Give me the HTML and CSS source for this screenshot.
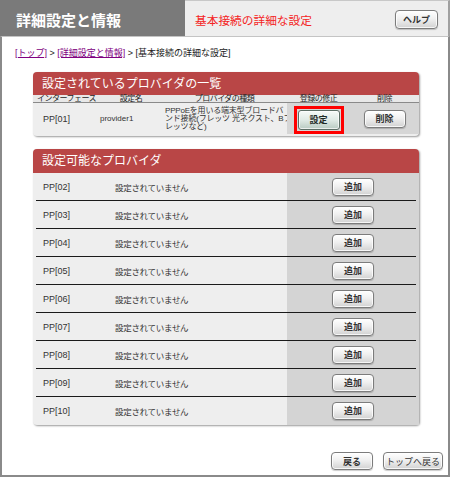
FILE: index.html
```html
<!DOCTYPE html>
<html lang="ja">
<head>
<meta charset="utf-8">
<title>詳細設定と情報</title>
<link rel="stylesheet" href="styles.css">
</head>
<body>
<div class="page">
  <header class="top">
    <div class="title">詳細設定と情報</div>
    <div class="sub">
      <span class="sub-text">基本接続の詳細な設定</span>
      <button class="btn help">ヘルプ</button>
    </div>
  </header>
  <main class="main">
    <nav class="crumb"><a href="#">[トップ]</a> &gt; <a href="#">[詳細設定と情報]</a> &gt; [基本接続の詳細な設定]</nav>

    <section class="panel p1">
      <h2>設定されているプロバイダの一覧</h2>
      <div class="cols head">
        <div>インターフェース</div>
        <div>設定名</div>
        <div>プロバイダの種類</div>
        <div>登録の修正</div>
        <div>削除</div>
      </div>
      <div class="cols data">
        <div class="c c-if">PP[01]</div>
        <div class="c c-name">provider1</div>
        <div class="c c-type">PPPoEを用いる端末型ブロードバ<br>ンド接続(フレッツ 光ネクスト、Bフ<br>レッツなど)</div>
        <div class="c c-btn gray"><span class="hl"><button class="btn green">設定</button></span></div>
        <div class="c c-btn gray"><button class="btn">削除</button></div>
      </div>
    </section>

    <section class="panel p2">
      <h2>設定可能なプロバイダ</h2>
      <div class="prow"><div>PP[02]</div><div class="st">設定されていません</div><div class="gray"><button class="btn">追加</button></div></div>
      <div class="prow"><div>PP[03]</div><div class="st">設定されていません</div><div class="gray"><button class="btn">追加</button></div></div>
      <div class="prow"><div>PP[04]</div><div class="st">設定されていません</div><div class="gray"><button class="btn">追加</button></div></div>
      <div class="prow"><div>PP[05]</div><div class="st">設定されていません</div><div class="gray"><button class="btn">追加</button></div></div>
      <div class="prow"><div>PP[06]</div><div class="st">設定されていません</div><div class="gray"><button class="btn">追加</button></div></div>
      <div class="prow"><div>PP[07]</div><div class="st">設定されていません</div><div class="gray"><button class="btn">追加</button></div></div>
      <div class="prow"><div>PP[08]</div><div class="st">設定されていません</div><div class="gray"><button class="btn">追加</button></div></div>
      <div class="prow"><div>PP[09]</div><div class="st">設定されていません</div><div class="gray"><button class="btn">追加</button></div></div>
      <div class="prow"><div>PP[10]</div><div class="st">設定されていません</div><div class="gray"><button class="btn">追加</button></div></div>
    </section>

    <div class="footer">
      <button class="btn">戻る</button>
      <button class="btn wide">トップへ戻る</button>
    </div>
  </main>
</div>
</body>
</html>
```

FILE: styles.css
```css
* { box-sizing: border-box; margin: 0; padding: 0; }
html, body { width: 450px; height: 477px; }
body {
  font-family: "Liberation Sans", "Noto Sans CJK JP", sans-serif;
  color: #333;
  background: #fff;
  overflow: hidden;
}
.page { display: flex; flex-direction: column; height: 477px; }

.top { display: flex; height: 36px; flex: none; }
.title {
  width: 185px;
  background: #7a7a7a;
  color: #fff;
  font-weight: bold;
  font-size: 15px;
  padding: 3px 0 0 16px;
  display: flex;
  align-items: center;
}
.sub {
  flex: 1;
  background: #eeeeee;
  border-top: 1px solid #c8c8c8;
  border-right: 2px solid #a0a0a0;
  display: flex;
  align-items: center;
  justify-content: space-between;
  padding: 2px 10px 0 10px;
}
.sub-text { color: #f42424; font-size: 11.7px; }

.main {
  flex: 1;
  border: 2px solid #8a8a8a;
  border-top: 1px solid #c4c4c4;
  display: flex;
  flex-direction: column;
}
.crumb { font-size: 9px; line-height: 11px; padding: 11px 0 0 13px; color: #222; }
.crumb a { color: #800080; text-decoration: underline; }

.panel {
  margin-left: 31px;
  width: 386px;
  background: #eeeeee;
  border-radius: 4px;
  box-shadow: 1px 1px 2px rgba(0, 0, 0, 0.4);
}
.panel h2 {
  background: #b94646;
  color: #fff;
  font-weight: normal;
  font-size: 12px;
  height: 23px;
  line-height: 24px;
  padding-left: 9px;
  border-radius: 4px 4px 0 0;
}
.p1 { margin-top: 13px; padding-bottom: 2px; }
.p2 { margin-top: 13px; }
.p2 h2 { height: 24px; line-height: 25px; }

.cols { display: grid; grid-template-columns: 67px 62px 125px 63px 69px; }
.cols.head {
  height: 8px;
  font-size: 8px;
  line-height: 7px;
  letter-spacing: -0.5px;
  text-align: center;
  border-bottom: 1px solid #8a8a8a;
  background: #e8e8e8;
  white-space: nowrap;
  color: #222;
}
.cols.data { height: 31px; }
.c { display: flex; align-items: center; height: 100%; }
.c-if { font-size: 9px; padding-left: 10px; }
.c-name { font-size: 8px; }
.c-type { font-size: 8px; line-height: 8px; padding-left: 3px; white-space: nowrap; letter-spacing: -0.2px; }
.c-btn { justify-content: center; }
.gray { background: #d6d6d6; }
.hl { display: flex; border: 3px solid #ff0000; padding: 1px; margin-top: 2px; }

.prow {
  display: grid;
  grid-template-columns: 82px 172px 132px;
  height: 28px;
}
.prow > div {
  display: flex;
  align-items: center;
  padding-bottom: 1px;
  font-size: 9px;
  background: linear-gradient(#1a1a1a, #1a1a1a) no-repeat 0 100% / 100% 1px;
}
.prow > div:first-child {
  padding-left: 10px;
  background-position: 3px 100%;
  background-size: calc(100% - 3px) 1px;
}
.prow > .st { font-size: 8.5px; letter-spacing: -0.3px; }
.prow > .gray {
  justify-content: center;
  background: linear-gradient(#1a1a1a, #1a1a1a) no-repeat 0 100% / calc(100% - 3px) 1px, #d4d4d4;
}
.prow:last-child > div { background-size: 0 0; }
.prow:last-child > .gray { background: #d4d4d4; }

.btn {
  width: 42px;
  height: 18px;
  border: 1px solid #7c7c7c;
  border-radius: 4px;
  background: linear-gradient(#ffffff, #f0f0f0 45%, #d2d2d2);
  box-shadow: inset 0 0 0 1px rgba(255, 255, 255, 0.8), 0 1px 1px rgba(0, 0, 0, 0.2);
  font-family: "Noto Sans CJK JP", sans-serif;
  font-weight: bold;
  font-size: 9px;
  line-height: 1;
  color: #333;
  padding: 0;
}
.btn.help { width: 43px; height: 19px; }
.btn.wide { width: 60px; font-weight: normal; }
.btn.green {
  height: 20px;
  border-color: #5d6f66;
  border-radius: 3px;
  background: linear-gradient(#f6faf8, #e0eae5 50%, #b9cbc2);
  box-shadow: inset 0 0 0 1px rgba(255, 255, 255, 0.7);
  color: #1f2a25;
}

.footer {
  margin-top: auto;
  display: flex;
  justify-content: flex-end;
  gap: 10px;
  padding: 0 5px 5px 0;
}
```
